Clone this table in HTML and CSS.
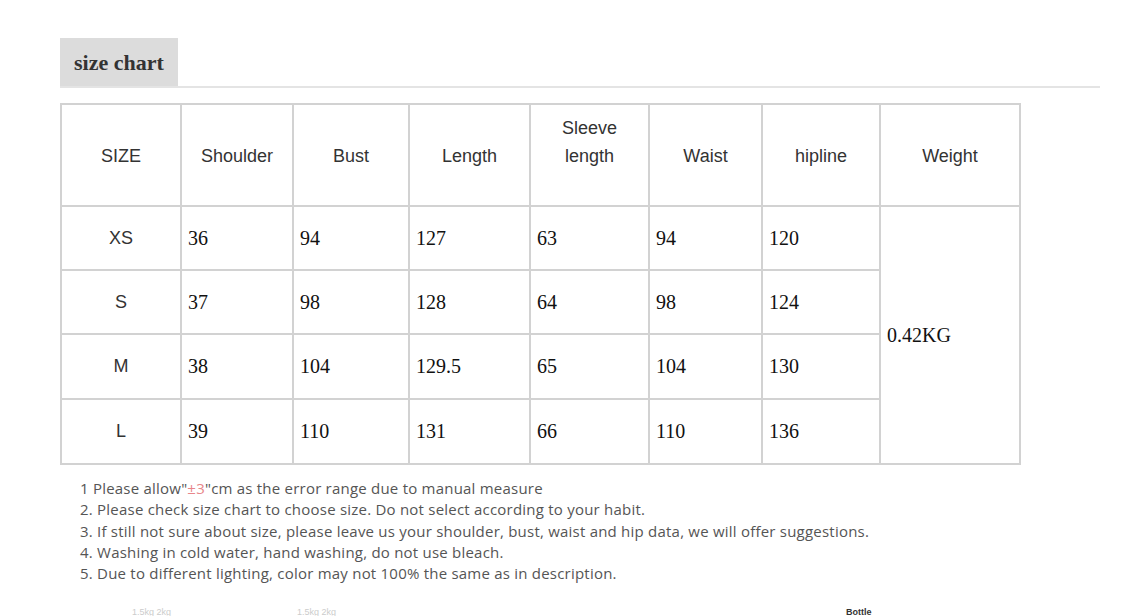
FILE: index.html
```html
<!DOCTYPE html>
<html>
<head>
<meta charset="utf-8">
<link rel="stylesheet" href="styles.css">
</head>
<body>
<div class="page">
  <div class="tabbar">
    <div class="tab">size chart</div>
  </div>
  <table class="chart">
    <colgroup>
      <col class="c1"><col class="c2"><col class="c3"><col class="c4"><col class="c5"><col class="c6"><col class="c7"><col class="c8">
    </colgroup>
    <tr class="head">
      <th>SIZE</th><th>Shoulder</th><th>Bust</th><th>Length</th><th class="two">Sleeve<br>length</th><th>Waist</th><th>hipline</th><th>Weight</th>
    </tr>
    <tr><td class="sz">XS</td><td>36</td><td>94</td><td>127</td><td>63</td><td>94</td><td>120</td><td class="wt" rowspan="4">0.42KG</td></tr>
    <tr><td class="sz">S</td><td>37</td><td>98</td><td>128</td><td>64</td><td>98</td><td>124</td></tr>
    <tr class="tall"><td class="sz">M</td><td>38</td><td>104</td><td>129.5</td><td>65</td><td>104</td><td>130</td></tr>
    <tr class="tall"><td class="sz">L</td><td>39</td><td>110</td><td>131</td><td>66</td><td>110</td><td>136</td></tr>
  </table>
  <ol class="notes">
    <li>1 Please allow"<span class="red">±3</span>"cm as the error range due to manual measure</li>
    <li>2. Please check size chart to choose size. Do not select according to your habit.</li>
    <li>3. If still not sure about size, please leave us your shoulder, bust, waist and hip data, we will offer suggestions.</li>
    <li>4. Washing in cold water, hand washing, do not use bleach.</li>
    <li>5. Due to different lighting, color may not 100% the same as in description.</li>
  </ol>
  <div class="cutoff">
    <span class="faint f1">1.5kg 2kg</span>
    <span class="faint f2">1.5kg 2kg</span>
    <span class="dark">Bottle</span>
  </div>
</div>
</body>
</html>
```
FILE: styles.css
```css
html, body {
  margin: 0;
  padding: 0;
  background: #fff;
  overflow: hidden;
  height: 616px;
}
.page {
  padding: 38px 0 0 60px;
  width: 1040px;
}
.tabbar {
  border-bottom: 2px solid #e4e4e4;
  height: 48px;
}
.tab {
  display: inline-block;
  width: 118px;
  height: 48px;
  box-sizing: border-box;
  background: #dcdcdc;
  font-family: "Liberation Serif", serif;
  font-weight: bold;
  font-size: 22px;
  color: #333;
  padding: 12px 0 0 14px;
}
.chart {
  margin-top: 15px;
  border-collapse: collapse;
  table-layout: fixed;
  width: 959px;
}
.c1 { width: 120px; }
.c2 { width: 112px; }
.c3 { width: 116px; }
.c4 { width: 121px; }
.c5 { width: 119px; }
.c6 { width: 113px; }
.c7 { width: 118px; }
.c8 { width: 140px; }
.chart th, .chart td {
  border: 2px solid #d2d2d2;
  padding: 0 0 0 6px;
}
.chart th {
  height: 63px;
  font-family: "Liberation Sans", Arial, sans-serif;
  font-weight: normal;
  font-size: 18px;
  line-height: 28px;
  color: #333;
  text-align: center;
  vertical-align: top;
  padding: 37px 0 0 0;
}
.chart th.two {
  height: 91px;
  padding-top: 9px;
}
.chart td {
  height: 62px;
  font-family: "Liberation Serif", serif;
  font-size: 20px;
  color: #111;
  text-align: left;
}
.chart tr.tall td {
  height: 63px;
}
.chart td.sz {
  font-family: "Liberation Sans", Arial, sans-serif;
  font-size: 18px;
  color: #333;
  text-align: center;
  padding: 0;
}
.chart td.wt {
  padding-left: 6px;
}
.notes {
  list-style: none;
  margin: 13px 0 0 20px;
  padding: 0;
  font-family: "Open Sans", sans-serif;
  font-size: 15px;
  line-height: 21.3px;
  color: #555;
  letter-spacing: 0.22px;
}
.red { color: #e8868a; }
.cutoff {
  margin-top: 21px;
  height: 14px;
  position: relative;
  font-family: "Liberation Sans", Arial, sans-serif;
  font-size: 9px;
}
.faint { position: absolute; top: 2px; color: #ccc; }
.f1 { left: 72px; }
.f2 { left: 237px; }
.dark { position: absolute; top: 2px; left: 786px; color: #333; font-weight: bold; }
```
